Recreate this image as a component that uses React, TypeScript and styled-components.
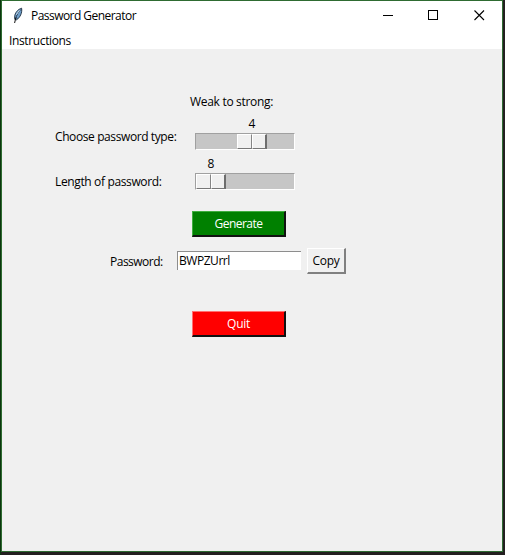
import React from "react";
import styled, { createGlobalStyle } from "styled-components";

const GlobalStyle = createGlobalStyle`
  * { box-sizing: border-box; }
  body {
    margin: 0;
    background: #231f20;
    font: 12px/16px "Open Sans", "Noto Sans", sans-serif;
    color: #000;
    overflow: hidden;
  }
`;

const Desktop = styled.div`
  width: 505px;
  height: 555px;
  padding: 0 2px 3px 1px;
  background: linear-gradient(90deg, #0c360e 0 1px, #231f20 1px);
`;

const Window = styled.div`
  display: flex;
  flex-direction: column;
  height: 552px;
  border: 1px solid #2e6b31;
  background: #f0f0f0;
`;

const TitleBar = styled.header`
  display: flex;
  align-items: center;
  height: 31px;
  padding: 0 0 2px 10px;
  background: #fff;
`;

const Title = styled.div`
  flex: 1;
  padding-left: 7px;
`;

const Controls = styled.div`
  display: flex;
`;

const ControlButton = styled.button`
  display: grid;
  place-items: center;
  width: 45.5px;
  height: 29px;
  padding: 0;
  border: 0;
  background: transparent;
`;

const MenuBar = styled.nav`
  display: flex;
  align-items: center;
  height: 17px;
  padding: 0 7px 0;
  background: #fff;
`;

const Text = styled.span<{ $spacing?: number }>`
  white-space: nowrap;
  letter-spacing: ${(p) => p.$spacing ?? 0}px;
`;

const Form = styled.main`
  display: flex;
  flex-direction: column;
  flex: 1;
  padding-top: 45px;
`;

const Heading = styled.div`
  height: 16px;
  padding-left: 188px;
`;

const ScaleRow = styled.div<{ $gap: number; $drop: number }>`
  display: grid;
  grid-template-columns: 140px 100px;
  height: 34px;
  margin-top: ${(p) => p.$gap}px;
  padding-left: 53px;

  & > span {
    padding-top: ${(p) => p.$drop}px;
  }
`;

const Scale = styled.div`
  display: flex;
  flex-direction: column;
`;

const ScaleValue = styled.div<{ $left: number }>`
  width: 30px;
  height: 17px;
  margin-left: ${(p) => p.$left}px;
  text-align: center;
`;

const Trough = styled.div<{ $left: number }>`
  height: 17px;
  padding-left: ${(p) => p.$left}px;
  border: 1px solid #fff;
  border-top-color: #a0a0a0;
  border-left-color: #a0a0a0;
  background: #c6c6c6;
`;

const Thumb = styled.div`
  display: flex;
  width: 30px;
  height: 15px;
`;

const ThumbHalf = styled.div<{ $end?: boolean }>`
  flex: 1;
  border: 1px solid #fff;
  border-right: ${(p) => (p.$end ? 2 : 1)}px solid ${(p) => (p.$end ? "#6d6d6d" : "#858585")};
  border-bottom-color: #777;
  background: #f0f0f0;
`;

const ActionRow = styled.div<{ $gap: number }>`
  height: 26px;
  margin-top: ${(p) => p.$gap}px;
  padding-left: 190px;
`;

const ActionButton = styled.button<{ $fill: string; $light: string }>`
  display: grid;
  place-items: center;
  width: 94px;
  height: 26px;
  padding: 0;
  font: inherit;
  color: #fff;
  background: ${(p) => p.$fill};
  border: 1px solid ${(p) => p.$light};
  border-right: 2px solid #111;
  border-bottom: 2px solid #111;
`;

const PasswordRow = styled.div`
  display: flex;
  align-items: center;
  height: 26px;
  margin-top: 11px;
  padding-left: 108px;
`;

const PasswordLabel = styled.label`
  width: 67px;
  padding-top: 1px;
`;

const Entry = styled.div`
  display: flex;
  align-items: center;
  width: 124px;
  height: 19px;
  margin-bottom: 1px;
  padding: 0 1px;
  border-top: 1px solid #8d8d8d;
  border-left: 1px solid #8d8d8d;
  background: #fff;
`;

const CopyButton = styled.button`
  display: grid;
  place-items: center;
  width: 39px;
  height: 26px;
  margin-left: 6px;
  padding: 0;
  font: inherit;
  color: #000;
  background: #f0f0f0;
  border: 1px solid #fff;
  border-right: 2px solid #808080;
  border-bottom: 2px solid #808080;
`;

const Feather = () => (
  <svg width="12" height="17" viewBox="0 0 12 17">
    <path d="M9.6 1.2 C6 2.2 2.8 5.8 2.6 9.8 L2.8 12.4 L4.6 12.8 C8 10.5 10.4 6 9.6 1.2Z" fill="#6f9fcb" stroke="#1a2a3c" strokeWidth=".9" />
    <path d="M9 2.4 C6.4 4.5 4.4 8 3.6 12.6" fill="none" stroke="#26394e" strokeWidth="1" />
    <path d="M3.9 10.5 L2.6 16" fill="none" stroke="#111" strokeWidth="1" />
    <path d="M7.6 3 L4.3 7.8" fill="none" stroke="#d3e5f4" strokeWidth=".9" />
  </svg>
);

type ScaleFieldProps = {
  label: string;
  spacing: number;
  value: number;
  offset: number;
  gap: number;
  drop: number;
};

const ScaleField = ({ label, spacing, value, offset, gap, drop }: ScaleFieldProps) => (
  <ScaleRow $gap={gap} $drop={drop}>
    <Text $spacing={spacing}>{label}</Text>
    <Scale>
      <ScaleValue $left={offset + 1}>{value}</ScaleValue>
      <Trough $left={offset}>
        <Thumb>
          <ThumbHalf />
          <ThumbHalf $end />
        </Thumb>
      </Trough>
    </Scale>
  </ScaleRow>
);

export default function App() {
  return (
    <Desktop>
      <GlobalStyle />
      <Window>
        <TitleBar>
          <Feather />
          <Title>
            <Text $spacing={-0.54}>Password Generator</Text>
          </Title>
          <Controls>
            <ControlButton aria-label="Minimize">
              <svg width="11" height="11" shapeRendering="crispEdges">
                <path d="M0 5.5H10" stroke="#000" />
              </svg>
            </ControlButton>
            <ControlButton aria-label="Maximize">
              <svg width="11" height="11" shapeRendering="crispEdges">
                <rect x=".5" y=".5" width="9" height="9" fill="none" stroke="#000" />
              </svg>
            </ControlButton>
            <ControlButton aria-label="Close">
              <svg width="11" height="11">
                <path d="M.5 .5L10 10M10 .5L.5 10" stroke="#000" strokeWidth="1.1" />
              </svg>
            </ControlButton>
          </Controls>
        </TitleBar>
        <MenuBar>
          <Text $spacing={-0.37}>Instructions</Text>
        </MenuBar>
        <Form>
          <Heading>
            <Text $spacing={-0.3}>Weak to strong:</Text>
          </Heading>
          <ScaleField label="Choose password type:" spacing={-0.4} value={4} offset={41} gap={6} drop={13} />
          <ScaleField label="Length of password:" spacing={-0.36} value={8} offset={0} gap={6} drop={18} />
          <ActionRow $gap={21}>
            <ActionButton $fill="#008000" $light="#3fae3f">
              <Text $spacing={-0.52}>Generate</Text>
            </ActionButton>
          </ActionRow>
          <PasswordRow>
            <PasswordLabel>
              <Text $spacing={-0.5}>Password:</Text>
            </PasswordLabel>
            <Entry>
              <Text $spacing={-0.45}>BWPZUrrl</Text>
            </Entry>
            <CopyButton>
              <Text $spacing={-0.3}>Copy</Text>
            </CopyButton>
          </PasswordRow>
          <ActionRow $gap={37}>
            <ActionButton $fill="#ff0000" $light="#ff7070">
              <Text $spacing={-0.3}>Quit</Text>
            </ActionButton>
          </ActionRow>
        </Form>
      </Window>
    </Desktop>
  );
}
